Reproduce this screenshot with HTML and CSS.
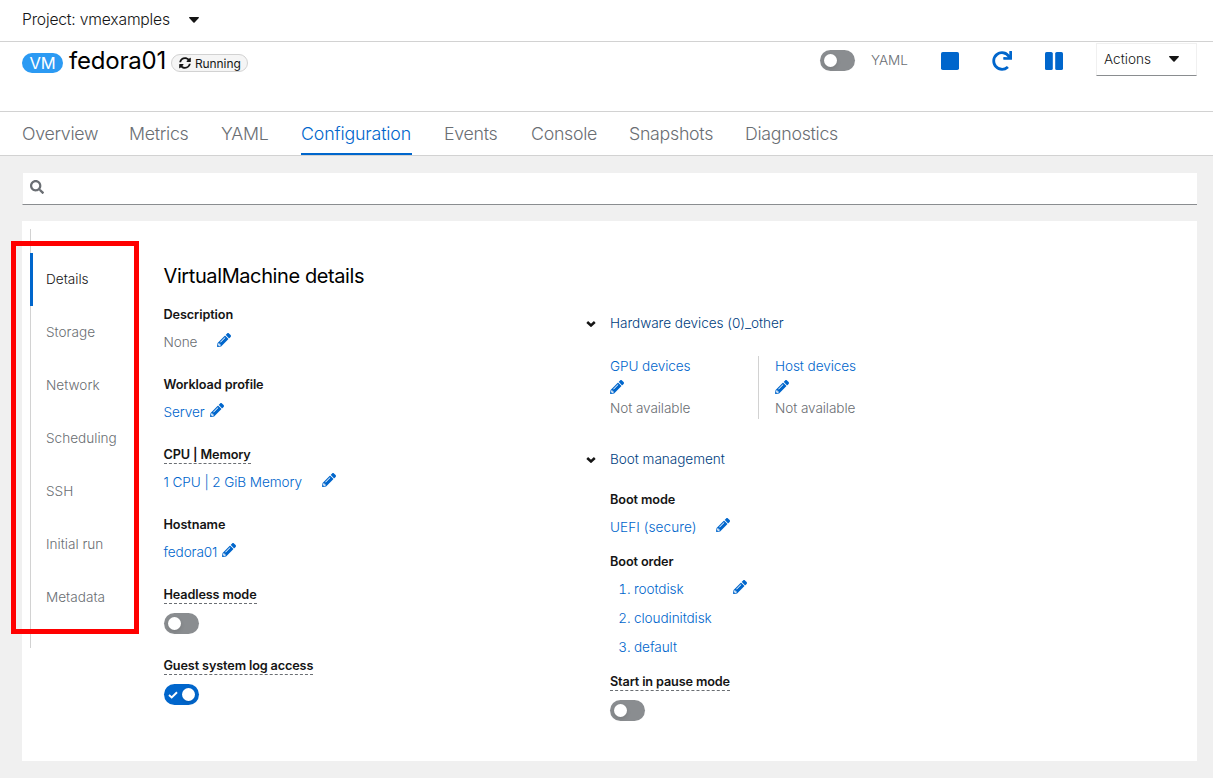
FILE: index.html
```
<!DOCTYPE html>
<html lang="en">
<head>
<meta charset="utf-8">
<title>fedora01 · Configuration</title>
<link rel="stylesheet" href="styles.css">
</head>
<body>
<svg class="sprite" aria-hidden="true">
  <symbol id="pencil" viewBox="0 0 512 512"><path d="M497.9 142.1l-46.1 46.1c-4.7 4.7-12.3 4.7-17 0l-111-111c-4.7-4.7-4.7-12.3 0-17l46.1-46.1c18.7-18.7 49.1-18.7 67.9 0l60.1 60.1c18.8 18.7 18.8 49.1 0 67.9zM284.2 99.8L21.6 362.4.4 483.9c-2.9 16.4 11.4 30.6 27.8 27.8l121.5-21.3 262.6-262.6c4.7-4.7 4.7-12.3 0-17l-111-111c-4.8-4.7-12.4-4.7-17.1 0zM124.1 339.9c-5.5-5.5-5.5-14.3 0-19.8l154-154c5.5-5.5 14.3-5.5 19.8 0s5.5 14.3 0 19.8l-154 154c-5.5 5.5-14.3 5.5-19.8 0zM88 424h48v36.3l-64.5 11.3-31.1-31.1L51.7 376H88v48z"/></symbol>
  <symbol id="caret" viewBox="0 0 10 6"><path d="M.7 0h8.6c.6 0 .9.7.5 1.1L5.6 5.4a.8.8 0 0 1-1.2 0L.2 1.100C-.2.7.1 0 .7 0z"/></symbol>
  <symbol id="chevron" viewBox="0 0 10 6"><path d="M1.200 1 5 4.500 8.800 1" fill="none" stroke="currentColor" stroke-width="2.500"/></symbol>
</svg>

<header class="project-bar">Project: vmexamples <svg class="caret"><use href="#caret"/></svg></header>

<section class="heading">
  <span class="vm-badge">VM</span>
  <h1>fedora01</h1>
  <span class="status">
    <svg class="sync" viewBox="0 0 512 512"><path d="M370.72 133.28C339.458 104.008 298.888 87.962 255.848 88c-77.458.068-144.328 53.178-162.791 126.85-1.344 5.363-6.122 9.15-11.651 9.15H24.103c-7.498 0-13.194-6.807-11.807-14.176C33.933 94.924 134.813 8 256 8c66.448 0 126.791 26.136 171.315 68.685L463.030 40.970C478.149 25.851 504 36.559 504 57.941V192c0 13.255-10.745 24-24 24H345.941c-21.382 0-32.090-25.851-16.971-40.971l41.750-41.749zM32 296h134.059c21.382 0 32.090 25.851 16.971 40.971l-41.750 41.750c31.262 29.273 71.835 45.319 114.876 45.280 77.418-.070 144.315-53.144 162.787-126.849 1.344-5.363 6.122-9.150 11.651-9.150h57.304c7.498 0 13.194 6.807 11.807 14.176C478.067 417.076 377.187 504 256 504c-66.448 0-126.791-26.136-171.315-68.685L48.970 471.030C33.851 486.149 8 475.441 8 454.059V320c0-13.255 10.745-24 24-24z"/></svg>
    <span>Running</span>
  </span>
  <div class="controls">
    <span class="toggle"></span>
    <span class="yaml-label">YAML</span>
    <svg class="action stop" viewBox="0 0 18 18"><rect width="18" height="18" rx="1.800"/></svg>
    <svg class="action redo" viewBox="0 0 512 512"><path d="M500.330 0h-47.410a12 12 0 0 0-12 12.570l4 82.760A247.420 247.420 0 0 0 256 8C119.340 8 7.900 119.530 8 256.190 8.100 393.070 119.100 504 256 504a247.100 247.100 0 0 0 166.180-63.910 12 12 0 0 0 .480-17.430l-34-34a12 12 0 0 0-16.380-.550A176 176 0 1 1 402.100 157.800l-101.530-4.870a12 12 0 0 0-12.570 12v47.410a12 12 0 0 0 12 12h200.330a12 12 0 0 0 12-12V12a12 12 0 0 0-12-12z"/></svg>
    <svg class="action pause" viewBox="0 0 18 18"><rect width="7.800" height="18" rx="1.600"/><rect x="10.200" width="7.800" height="18" rx="1.600"/></svg>
    <button class="actions">Actions <svg class="caret"><use href="#caret"/></svg></button>
  </div>
</section>

<nav class="tabs">
  <a>Overview</a><a>Metrics</a><a>YAML</a><a class="current">Configuration</a><a>Events</a><a>Console</a><a>Snapshots</a><a>Diagnostics</a>
</nav>

<main>
  <div class="search"><svg viewBox="0 0 512 512"><path d="M505 442.700L405.300 343c-4.500-4.500-10.600-7-17-7H372c27.600-35.300 44-79.700 44-128C416 93.100 322.900 0 208 0S0 93.100 0 208s93.100 208 208 208c48.300 0 92.700-16.400 128-44v16.300c0 6.400 2.500 12.500 7 17l99.700 99.700c9.400 9.400 24.600 9.400 33.900 0l28.300-28.300c9.400-9.400 9.400-24.600.100-34zM208 336c-70.700 0-128-57.200-128-128 0-70.700 57.200-128 128-128 70.700 0 128 57.200 128 128 0 70.700-57.200 128-128 128z"/></svg></div>

  <div class="panel">
    <nav class="side">
      <a class="current">Details</a><a>Storage</a><a>Network</a><a>Scheduling</a><a>SSH</a><a>Initial run</a><a>Metadata</a>
    </nav>
    <div class="highlight"></div>

    <section class="details">
      <h2>VirtualMachine details</h2>
      <div class="field"><b>Description</b><div class="value muted wide">None <svg class="pencil"><use href="#pencil"/></svg></div></div>
      <div class="field"><b>Workload profile</b><div class="value">Server <svg class="pencil"><use href="#pencil"/></svg></div></div>
      <div class="field"><b class="help">CPU | Memory</b><div class="value wide">1 CPU | 2 GiB Memory <svg class="pencil"><use href="#pencil"/></svg></div></div>
      <div class="field"><b>Hostname</b><div class="value">fedora01 <svg class="pencil"><use href="#pencil"/></svg></div></div>
      <div class="field switch"><b class="help">Headless mode</b><span class="toggle"></span></div>
      <div class="field switch"><b class="help">Guest system log access</b><span class="toggle on"><svg viewBox="0 0 10 8"><path d="M1 4 3.700 6.500 9 1.300" fill="none" stroke="#fff" stroke-width="1.900"/></svg></span></div>
    </section>

    <section class="extra">
      <div class="expander"><svg><use href="#chevron"/></svg>Hardware devices (0)_other</div>
      <div class="devices">
        <div class="device"><a>GPU devices</a><svg class="pencil"><use href="#pencil"/></svg><span>Not available</span></div>
        <div class="device"><a>Host devices</a><svg class="pencil"><use href="#pencil"/></svg><span>Not available</span></div>
      </div>
      <div class="expander"><svg><use href="#chevron"/></svg>Boot management</div>
      <div class="boot">
        <div class="field mode"><b>Boot mode</b><div class="value wide">UEFI (secure) <svg class="pencil"><use href="#pencil"/></svg></div></div>
        <b>Boot order</b>
        <div class="order">
          <ol><li>rootdisk</li><li>cloudinitdisk</li><li>default</li></ol>
          <svg class="pencil"><use href="#pencil"/></svg>
        </div>
        <div class="field switch"><b class="help">Start in pause mode</b><span class="toggle"></span></div>
      </div>
    </section>
  </div>
</main>
</body>
</html>
```
FILE: styles.css
```
* { box-sizing: border-box; }
body { margin: 0; background: #fff; color: #151515; font: 350 13.6px/21px Inter, "Open Sans", sans-serif; letter-spacing: -0.09px; white-space: nowrap; }
svg { display: block; flex: none; fill: currentColor; }
.sprite { position: absolute; width: 0; height: 0; }
h1, h2 { margin: 0; font-weight: 400; }
b { font-weight: 600; font-size: 12.7px; letter-spacing: -0.1px; line-height: 29px; height: 28px; display: block; }

.project-bar { height: 42px; padding: 0 22px 2px; display: flex; align-items: center; gap: 19px; font-size: 15.7px; letter-spacing: -0.2px; border-bottom: 1px solid #d2d2d2; }
.caret { width: 10px; height: 6px; }

.heading { height: 70px; padding: 1px 16px 0 22px; display: flex; align-items: flex-start; border-bottom: 1px solid #d2d2d2; }
.vm-badge { width: 41px; height: 20px; margin: 10px 6px 0 0; border-radius: 20px; background: #2b9af3; color: #fff; font-size: 16.5px; font-weight: 400; line-height: 20px; text-align: center; }
h1 { width: 102px; font-size: 24px; line-height: 36px; letter-spacing: -0.2px; color: #000; }
.status { width: 77px; height: 18px; margin-top: 11px; padding-left: 7px; display: flex; align-items: center; gap: 4px; border: 1px solid #d2d2d2; border-radius: 20px; background: #f5f5f5; font-size: 12px; font-weight: 400; letter-spacing: -0.1px; }
.sync { width: 12px; height: 12px; }
.controls { margin-left: auto; display: flex; }
.controls .toggle { margin: 7px 16px 0 0; }
.yaml-label { width: 70px; margin-top: 7px; color: #6a6e73; line-height: 20px; }
.action { color: #06c; margin-top: 9px; }
.stop { width: 18px; height: 18px; margin-right: 33px; }
.redo { width: 20px; height: 20px; margin: 8px 33px 0 0; }
.pause { width: 18px; height: 18px; margin-right: 33px; }
.actions { width: 101px; height: 33px; padding: 0 17px 1px 7px; display: flex; justify-content: space-between; align-items: center; border: 1px solid #f0f0f0; border-bottom-color: #8a8d90; background: #fff; color: #151515; font: inherit; letter-spacing: 0; }

.tabs { height: 44px; padding-left: 22px; display: grid; grid-template-columns: 75px 60px 48px 111px 55px 66px 84px 94px; column-gap: 32px; border-bottom: 1px solid #d2d2d2; color: #6a6e73; font-size: 17.8px; line-height: 44px; letter-spacing: -0.29px; font-weight: 350; }
.tabs a { height: 43px; }
.tabs .current { width: 111px; color: #06c; border-bottom: 2px solid #06c; letter-spacing: -0.16px; }

main { height: 622px; padding: 17px 16px 17px 22px; background: #f0f0f0; }
.search { height: 32px; padding: 7px; background: #fff; border-bottom: 1px solid #8a8d90; border-left: 1px solid #f0f0f0; color: #6a6e73; }
.search svg { width: 14px; height: 14px; }
.panel { position: relative; height: 540px; margin-top: 16px; padding: 8px; display: flex; background: #fff; }
.side { width: 133.5px; height: 419px; padding-top: 24px; border-left: 1px solid #d2d2d2; color: #6a6e73; letter-spacing: 0; }
.side a { display: block; height: 53px; padding-left: 15px; line-height: 52px; }
.side .current { margin-left: -1px; padding-left: 13px; border-left: 3px solid #06c; color: #151515; }
.highlight { position: absolute; left: -11px; top: 20px; width: 128px; height: 393px; border: 5px solid #f00; }

.details { width: 422.5px; padding-top: 31px; }
h2 { height: 40px; font-size: 20px; line-height: 32px; letter-spacing: -0.4px; color: #000; }
.field { height: 56px; margin-bottom: 14px; }
.value { height: 28px; display: flex; align-items: center; gap: 5px; color: #06c; }
.value.wide { gap: 20px; }
.value.muted { color: #6a6e73; }
.pencil { width: 14px; height: 14px; color: #06c; }
.value .pencil { margin-bottom: 4px; }
.field.switch { height: 57px; }
.help { width: max-content; height: 24px; line-height: 19px; padding-top: 5px; margin-bottom: 4px; border-bottom: 1px dashed #6a6e73; letter-spacing: -0.14px; }
.switch .help { margin-bottom: 9px; }
.toggle { display: block; width: 35px; height: 21px; padding: 4px; border-radius: 21px; background: #8a8d90; }
.toggle::before { content: ""; display: block; width: 13px; height: 13px; border-radius: 50%; background: #fff; box-shadow: 0 2px 4px rgba(3,3,3,.12); }
.toggle.on { display: flex; flex-direction: row-reverse; justify-content: space-between; align-items: center; background: #06c; }
.toggle.on svg { width: 10px; height: 8px; }

.extra { padding-top: 83px; }
.expander { height: 22px; display: flex; align-items: center; color: #004080; letter-spacing: -0.05px; }
.expander svg { width: 10px; height: 6px; margin: 1px 14px 0 0; color: #151515; }
.devices { display: flex; margin: 22px 0 29px 24px; height: 63px; }
.device { width: 148px; color: #6a6e73; }
.device > * { display: block; height: 21px; line-height: 20px; }
.device .pencil { height: 14px; margin: 3px 0 4px; }
.device a { color: #06c; }
.device + .device { padding-left: 16px; border-left: 1px solid #d2d2d2; }
.boot { padding: 15px 0 0 24px; }
.boot .mode { margin-bottom: 6px; }
.boot .value { letter-spacing: 0.05px; }
.order { display: flex; color: #06c; height: 87px; margin-bottom: 5px; }
ol { width: 123px; margin: 0; padding-left: 24px; line-height: 29px; }
.order .pencil { margin-top: 5px; }
```
